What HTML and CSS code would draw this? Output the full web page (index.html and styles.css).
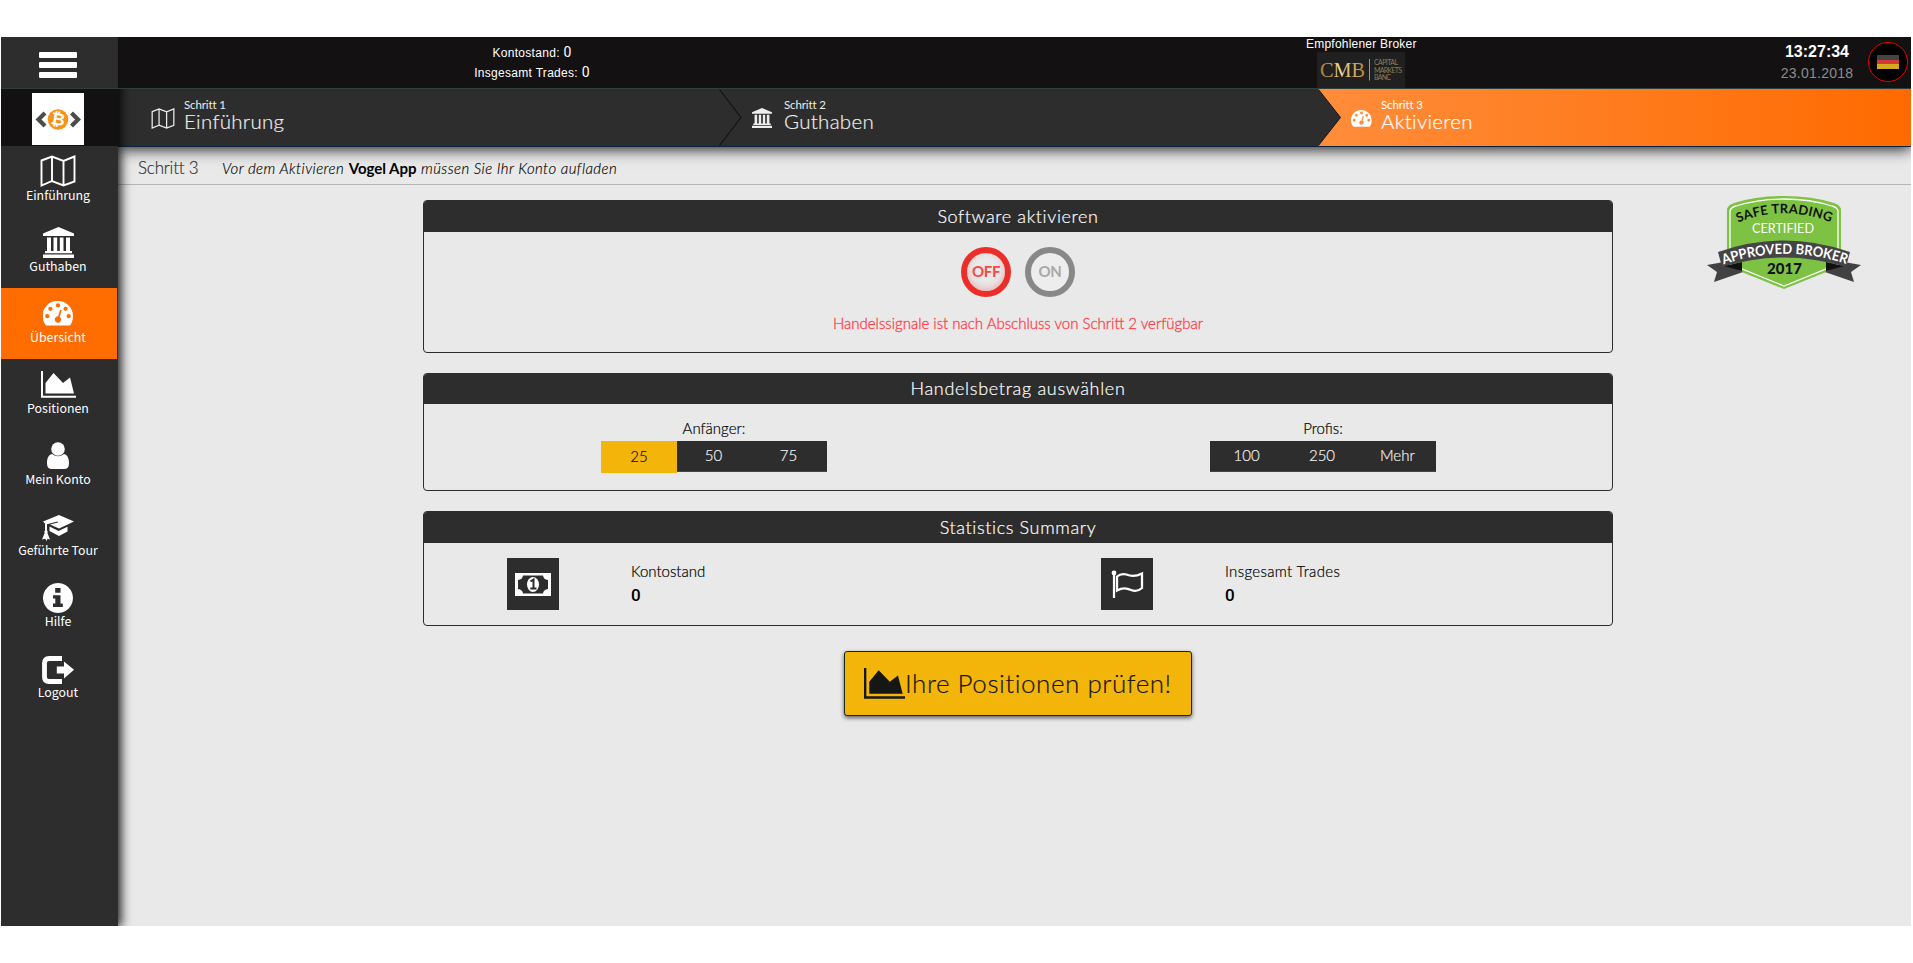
FILE: index.html
```
<!DOCTYPE html>
<html lang="de">
<head>
<meta charset="utf-8">
<title>Vogel App</title>
<link rel="stylesheet" href="styles.css">
</head>
<body>
<svg class="defs" aria-hidden="true">
  <symbol id="map" viewBox="0 0 36 32"><path d="M1.5 5.5 12 1.5 23.500 6 34.500 1.500V26.500L23.500 30.500 12 26 1.500 30.500ZM12 1.500V26M23.500 6V30.500" fill="none" stroke="currentColor" stroke-width="1.900"/></symbol>
  <symbol id="bank" viewBox="0 0 33 31"><path d="M16.500 0 32 6.500V9H1V6.500ZM5 10.500H9V24H5ZM11.500 10.500H15.200V24H11.500ZM17.800 10.500H21.500V24H17.800ZM24 10.500H28V24H24ZM3 24H30V26.300H3ZM1 27.500H32V31H1Z" fill="currentColor"/></symbol>
  <symbol id="gauge" viewBox="0 0 30 25"><path fill-rule="evenodd" fill="currentColor" d="M15 0A15 15 0 0 1 30 15C30 18 29.200 21 27.800 23.500Q27.300 24.500 26.500 24.500H3.500Q2.700 24.500 2.200 23.500A15 15 0 0 1 15 0ZM4.300 13A2.150 2.150 0 1 0 4.310 17.300 2.150 2.150 0 1 0 4.300 13ZM7.400 5.700A2.150 2.150 0 1 0 7.410 10 2.150 2.150 0 1 0 7.400 5.700ZM15 2.300A2.150 2.150 0 1 0 15.010 6.600 2.150 2.150 0 1 0 15 2.300ZM22.600 5.700A2.150 2.150 0 1 0 22.610 10 2.150 2.150 0 1 0 22.600 5.700ZM25.700 13A2.150 2.150 0 1 0 25.710 17.300 2.150 2.150 0 1 0 25.700 13ZM16.900 9 15.200 15.300A3.200 3.200 0 1 0 16.800 15.900L18.500 9.400Q17.900 8.200 16.900 9Z"/></symbol>
  <symbol id="chart" viewBox="0 0 35 27"><path fill="currentColor" d="M0 0H2V24.700H35V26.700H0ZM4.500 12 12.500 2 22 12 29 6.500 33 22.500H4.500Z"/></symbol>
  <symbol id="user" viewBox="0 0 22 27"><circle cx="11" cy="7" r="6.800" fill="currentColor"/><path fill="currentColor" d="M5 12Q11 16.500 17 12C21 13 22 17 22 21.500Q22 27 17 27H5Q0 27 0 21.500C0 17 1 13 5 12Z"/></symbol>
  <symbol id="cap" viewBox="0 0 32 26"><path fill="currentColor" d="M17 0 32 6.500 17 13.500 8 9.400 16 7.500 15.500 6.500 5 9.200 5 15.500Q6.400 16.500 5.400 18L8 24.500 5.500 23.800 4.500 26 3.300 23.700 0 24.500 2.700 18Q1.600 16.600 3 15.500L3 8.500 1 6.500ZM7.500 11.500 16.500 16 25.500 11.700V16.500L17 21 7.500 16Z"/></symbol>
  <symbol id="info" viewBox="0 0 30 30"><path fill="currentColor" fill-rule="evenodd" d="M15 0A15 15 0 1 1 14.990 0ZM12.200 5H17.500V9.700H12.200ZM10 12.200H17.500V20.500H19.800V24H10V20.500H12.300V15.500H10Z"/></symbol>
  <symbol id="exit" viewBox="0 0 32 28"><path d="M20 2.500H7Q2.500 2.500 2.500 7V21Q2.500 25.500 7 25.500H20" fill="none" stroke="currentColor" stroke-width="4.800"/><path fill="currentColor" d="M14.800 10.500H22V5.500L32 13.800 22 22.500V17.500H14.800Z"/></symbol>
</svg>

<div class="app">
  <aside class="sidebar">
    <div class="menu"><span></span><span></span><span></span></div>
    <div class="brand"><svg viewBox="0 0 52 52" width="52" height="52">
      <rect width="52" height="52" fill="#fff"/>
      <path d="M13 20 6.500 26.500 13 33M39.500 20 46 26.500 39.500 33" fill="none" stroke="#4b4b4b" stroke-width="4.200"/>
      <circle cx="26" cy="26.500" r="10.300" fill="#f7931a"/>
      <text x="26" y="32" text-anchor="middle" class="coin" transform="rotate(10 26 26)">₿</text>
    </svg></div>
    <nav class="nav">
      <a class="item"><span class="ico"><svg width="36" height="32"><use href="#map"/></svg></span>Einführung</a>
      <a class="item"><span class="ico low"><svg width="33" height="31"><use href="#bank"/></svg></span>Guthaben</a>
      <a class="item active"><span class="ico low"><svg width="30" height="25"><use href="#gauge"/></svg></span>Übersicht</a>
      <a class="item"><span class="ico low"><svg width="35" height="27"><use href="#chart"/></svg></span>Positionen</a>
      <a class="item"><span class="ico low"><svg width="22" height="27"><use href="#user"/></svg></span>Mein Konto</a>
      <a class="item"><span class="ico lower"><svg width="32" height="26"><use href="#cap"/></svg></span>Geführte Tour</a>
      <a class="item"><span class="ico low"><svg width="30" height="30"><use href="#info"/></svg></span>Hilfe</a>
      <a class="item"><span class="ico lower"><svg width="32" height="28"><use href="#exit"/></svg></span>Logout</a>
    </nav>
  </aside>

  <div class="main">
    <header class="topbar">
      <div class="account"><div>Kontostand: <b>0</b></div><div>Insgesamt Trades: <b>0</b></div></div>
      <div class="broker"><span>Empfohlener Broker</span>
        <svg class="cmb" width="88" height="36" viewBox="0 0 88 36">
          <defs><linearGradient id="gold"><stop offset="0" stop-color="#a87830"/><stop offset=".45" stop-color="#f2dc98"/><stop offset="1" stop-color="#b08136"/></linearGradient></defs>
          <rect width="88" height="36" fill="#202020"/>
          <text x="3" y="24.500" class="cmb-main" textLength="45" lengthAdjust="spacingAndGlyphs" fill="url(#gold)">CMB</text>
          <path d="M52.500 7V28.500" stroke="#b8935a" stroke-width="1"/>
          <text x="57" y="12.800" class="cmb-sub" textLength="24">CAPITAL</text>
          <text x="57" y="20.500" class="cmb-sub" textLength="28">MARKETS</text>
          <text x="57" y="28" class="cmb-sub" textLength="17">BANC</text>
        </svg>
      </div>
      <div class="clock"><strong>13:27:34</strong><span>23.01.2018</span></div>
      <div class="lang"><span class="flag"></span></div>
    </header>

    <div class="steps">
      <div class="step one"><svg class="step-ico" width="24" height="21"><use href="#map"/></svg><div class="label"><small>Schritt 1</small><span>Einführung</span></div></div>
      <div class="step two"><svg class="edge" width="24" height="57" viewBox="0 0 24 57"><path d="M.5.500 22 28.500 .5 56.500" fill="none" stroke="#111" stroke-width="1.100"/></svg><svg class="step-ico" width="22" height="20"><use href="#bank"/></svg><div class="label"><small>Schritt 2</small><span>Guthaben</span></div></div>
      <div class="step three"><svg class="edge" width="24" height="57" viewBox="0 0 24 57"><path d="M0 0 22.500 28.500 0 57Z" fill="#2d2d2d"/><path d="M.5.500 22.500 28.500 .5 56.500" fill="none" stroke="#161616"/></svg><svg class="step-ico" width="21" height="17"><use href="#gauge"/></svg><div class="label"><small>Schritt 3</small><span>Aktivieren</span></div></div>
    </div>

    <div class="hint"><span class="hint-step">Schritt 3</span><span class="hint-text"><i>Vor dem Aktivieren</i> <b>Vogel App</b> <i>müssen Sie Ihr Konto aufladen</i></span></div>

    <main class="content">
      <section class="panel activate">
        <h2>Software aktivieren</h2>
        <div class="switches"><span class="round off">OFF</span><span class="round on">ON</span></div>
        <p class="warn">Handelssignale ist nach Abschluss von Schritt 2 verfügbar</p>
      </section>
      <section class="panel amount">
        <h2>Handelsbetrag auswählen</h2>
        <div class="groups">
          <div class="group"><span>Anfänger:</span><div class="choices"><a class="sel">25</a><a>50</a><a>75</a></div></div>
          <div class="group"><span>Profis:</span><div class="choices"><a>100</a><a>250</a><a>Mehr</a></div></div>
        </div>
      </section>
      <section class="panel stats">
        <h2>Statistics Summary</h2>
        <div class="cells">
          <div class="cell"><span class="tile"><svg width="36" height="23" viewBox="0 0 36 23"><path fill="#fff" fill-rule="evenodd" d="M0 0H36V23H0ZM8 2.500Q7.500 6.500 3 7V16Q7.500 16.500 8 20.500H28Q28.500 16.500 33 16V7Q28.500 6.500 28 2.500Z"/><ellipse cx="18" cy="11.500" rx="6" ry="7.500" fill="#fff"/><path d="M15.500 8.500 18.500 6.500V15.500M15.300 15.500H21.500" fill="none" stroke="#2d2d2d" stroke-width="2"/></svg></span><div class="data"><span>Kontostand</span><b>0</b></div></div>
          <div class="cell"><span class="tile"><svg width="33" height="29" viewBox="0 0 33 29"><circle cx="3" cy="3" r="2.400" fill="#fff"/><path d="M3 3V28" stroke="#fff" stroke-width="2.200"/><path d="M6 6.500Q10 3 15.500 4.500C21 7 25 6.500 31 3.500V18Q26 22.500 20 20Q13 16.500 6 20.500Z" fill="none" stroke="#fff" stroke-width="2.300"/></svg></span><div class="data trades"><span>Insgesamt Trades</span><b>0</b></div></div>
        </div>
      </section>
      <a class="cta"><svg width="41" height="31" viewBox="0 0 35 27" preserveAspectRatio="none"><use href="#chart" width="35" height="27"/></svg><span>Ihre Positionen prüfen!</span></a>

      <svg class="badge" width="156" height="96" viewBox="0 0 156 96">
        <path d="M21 14Q22 10 28 8Q50 1 78 1T128 8Q134 10 135 14V71L78 94 21 71Z" fill="#7dc242"/>
        <path d="M24 16Q25 12 30 11Q52 4 78 4T126 11Q131 12 132 16V69L78 91 24 69Z" fill="none" stroke="#fff" stroke-width="1.300"/>
        <path d="M1 70 18 67 37 77 8 87 11 77ZM155 70 138 67 119 77 148 87 145 77Z" fill="#414042"/>
        <path d="M18 71 36 67V76ZM138 71 120 67V76Z" fill="#111"/>
        <path d="M12 57Q78 34 144 57L140 72Q78 53 16 72Z" fill="#454547"/>
        <path id="arc1" d="M32 27.500Q78 9 125 27.500" fill="none"/>
        <path id="arc2" d="M17.500 69.500Q78 48.500 140 69" fill="none"/>
        <text class="b-top"><textPath href="#arc1" textLength="95">SAFE TRADING</textPath></text>
        <text x="46" y="38" class="b-mid" textLength="62" lengthAdjust="spacingAndGlyphs">CERTIFIED</text>
        <text class="b-rib"><textPath href="#arc2" textLength="125" lengthAdjust="spacingAndGlyphs">APPROVED BROKER</textPath></text>
        <text x="61" y="78.500" class="b-year" textLength="35">2017</text>
      </svg>
    </main>
  </div>
</div>
</body>
</html>
```

FILE: styles.css
```
* { box-sizing: border-box; }
body { margin: 0; background: #fff; font-family: Lato, "Open Sans", sans-serif; }
.defs { position: absolute; width: 0; height: 0; }
svg { display: block; flex: none; }

.app { display: flex; width: 1910px; height: 889px; margin: 37px 0 0 1px; background: #e9e9e9; overflow: hidden; }

.sidebar { width: 117px; flex: none; background: #2d2d2d; z-index: 3; box-shadow: 2px 0 10px 1px rgba(0,0,0,.9); clip-path: inset(0 -20px 0 0); }
.menu { height: 52px; padding: 15px 0 0 38px; display: flex; flex-direction: column; gap: 4px; border-bottom: 1px solid #2f3f3a; }
.menu span { width: 38px; height: 6px; border-radius: 1px; background: #fff; }
.brand { height: 57px; background: #131112; padding: 4px 0 0 31px; }
.coin { font: bold 17px "DejaVu Sans", sans-serif; fill: #fff; }
.item { display: flex; flex-direction: column; align-items: center; height: 71px; padding: 8px 3px 0 0; color: #fff; font: 12.4px/17px "Noto Sans CJK SC", sans-serif; white-space: nowrap; }
.ico { height: 33px; display: flex; align-items: center; }
.low { padding-top: 2px; }
.lower { padding-top: 4px; }
.active { background: #ff6c00; margin-right: 1px; padding-right: 2px; }

.main { flex: 1; display: flex; flex-direction: column; min-width: 0; }
.topbar { position: relative; height: 52px; background: #131112; border-bottom: 1px solid #2f3f3a; display: flex; color: #fff; z-index: 4; font-family: "Liberation Sans", Arial, sans-serif; }
.account { width: 240px; margin-left: 294px; text-align: center; font-size: 12px; line-height: 20px; padding-top: 6px; letter-spacing: .3px; }
.account b { font: 14px/14px Roboto, sans-serif; }
.broker { width: 112px; margin-left: 654px; font-size: 12px; line-height: 15px; white-space: nowrap; letter-spacing: .22px; }
.broker span { display: block; }
.cmb { margin-left: 11px; letter-spacing: 0; }
.cmb-main { font: 21px "Liberation Serif", serif; }
.cmb-sub { font: 400 7px Lato, sans-serif; fill: #957b55; }
.clock { width: 80px; margin-left: 359px; padding-top: 4px; display: flex; flex-direction: column; align-items: center; line-height: 22px; }
.clock strong { font-size: 16px; }
.clock span { font-size: 14px; line-height: 21px; color: #8d8d8d; letter-spacing: .25px; }
.lang { width: 40px; height: 40px; margin: 5px 0 0 11px; border: 1px solid #e00; border-radius: 50%; background: #000; display: flex; align-items: center; justify-content: center; }
.flag { width: 22px; height: 14px; background: linear-gradient(#444 0 33%, #d33a35 33% 66%, #d3ab1f 66%); }

.steps { display: flex; height: 58px; border-bottom: 1px solid #0b2240; background: #2d2d2d; color: #eee; box-shadow: 0 2px 14px rgba(0,0,0,.9); z-index: 2; }
.step { position: relative; display: flex; align-items: flex-start; }
.one { width: 601px; padding-left: 33px; }
.two { width: 599px; padding-left: 32px; }
.three { flex: 1; padding-left: 33px; color: #fff; background: linear-gradient(90deg, #ff8d3b, #ff6a00); }
.edge { position: absolute; left: 0; top: 0; }
.step-ico { margin-top: 19px; }
.three .step-ico { margin-top: 21px; }
.label { display: flex; flex-direction: column; margin-left: 11px; font-weight: 400; }
.one .label { margin-left: 9px; }
.three .label { margin-left: 9px; }
.label small { font-size: 11.500px; line-height: 14px; margin-top: 9px; letter-spacing: -.12px; }
.label span { font-size: 20.5px; line-height: 24px; margin-top: -3px; letter-spacing: .3px; font-weight: 300; -webkit-text-stroke: .2px currentColor; }

.hint { height: 38px; border-bottom: 1px solid #b5b5b5; display: flex; align-items: center; padding: 4px 0 0 20px; color: #333; white-space: nowrap; }
.hint-step { width: 84px; font-weight: 300; font-size: 17px; letter-spacing: -.2px; -webkit-text-stroke: .2px currentColor; }
.hint-text { font-size: 15px; font-weight: 300; color: #000; letter-spacing: .42px; padding-top: 1px; -webkit-text-stroke: .15px currentColor; }
.hint-text b { font-weight: 700; letter-spacing: 0; -webkit-text-stroke: 0; }

.content { position: relative; display: flex; flex-direction: column; padding-left: 305px; }
.panel { width: 1190px; border: 1px solid #2d2d2d; border-radius: 4px; overflow: hidden; }
.panel h2 { margin: 0; height: 31px; background: #2d2d2d; color: #fff; font-size: 18px; font-weight: 300; line-height: 31px; text-align: center; letter-spacing: .63px; -webkit-text-stroke: .2px currentColor; }
.activate { margin-top: 15px; height: 153px; }
.switches { display: flex; justify-content: center; gap: 14px; margin-top: 15px; }
.round { width: 50px; height: 50px; border-radius: 50%; border: 6px solid; display: flex; align-items: center; justify-content: center; padding-bottom: 2px; font-size: 15px; font-weight: 700; letter-spacing: -.3px; }
.off { border-color: #ec2e2b; color: #fb4744; box-shadow: inset 0 -2px 7px rgba(236,46,43,.3); }
.on { border-color: #888; color: #a8a8a8; background: #ededed; }
.warn { margin: 15px 0 0; color: #ff4048; text-align: center; font-size: 15px; line-height: 22px; font-weight: 300; -webkit-text-stroke: .3px currentColor; }
.amount { margin-top: 20px; height: 118px; }
.panel.amount h2 { height: 30px; line-height: 28px; letter-spacing: .7px; }
.groups { display: flex; padding: 14px 0 0 177px; gap: 383px; }
.group { width: 226px; display: flex; flex-direction: column; align-items: center; font-size: 15px; font-weight: 300; line-height: 21px; -webkit-text-stroke: .2px currentColor; }
.choices { display: flex; width: 226px; align-items: flex-start; margin-top: 2px; }
.choices a { flex: 1; height: 31px; line-height: 28px; padding-right: 2px; background: #2d2d2d; color: #f0f0f0; text-align: center; border-bottom: 1px solid #444; }
.choices .sel { flex: 0 0 76px; height: 32px; line-height: 30px; padding: 0; background: #f3b50a; color: #111; border: 0; }
.stats { margin-top: 20px; height: 115px; }
.cells { display: flex; padding: 15px 0 0 83px; }
.cell { display: flex; width: 594px; flex: none; }
.cell + .cell { width: 420px; }
.tile { width: 52px; height: 52px; background: #2d2d2d; display: flex; align-items: center; justify-content: center; }
.data { display: flex; flex-direction: column; margin-left: 72px; padding-top: 2px; font-size: 15px; font-weight: 300; line-height: 23px; -webkit-text-stroke: .2px currentColor; }
.trades span { letter-spacing: .33px; }
.data b { font: 500 17px/24px Roboto, sans-serif; -webkit-text-stroke: 0; }
.cta { width: 348px; height: 65px; margin: 25px 0 0 421px; border: 1px solid #12291f; border-radius: 3px; background: #f3b50a; box-shadow: 0 2px 4px rgba(0,0,0,.6); display: flex; align-items: center; padding-left: 19px; color: #161616; font-size: 26px; font-weight: 300; white-space: nowrap; letter-spacing: .53px; -webkit-text-stroke: .2px currentColor; }
.cta span { padding-bottom: 2px; }

.badge { position: absolute; left: 1588px; top: 10px; }
.b-top { font: 700 13px Lato, sans-serif; fill: #111; }
.b-mid { font: 13px Lato, sans-serif; fill: #fff; }
.b-rib { font: 700 14px Lato, sans-serif; fill: #fff; }
.b-year { font: 900 15px Lato, sans-serif; fill: #111; }
```
